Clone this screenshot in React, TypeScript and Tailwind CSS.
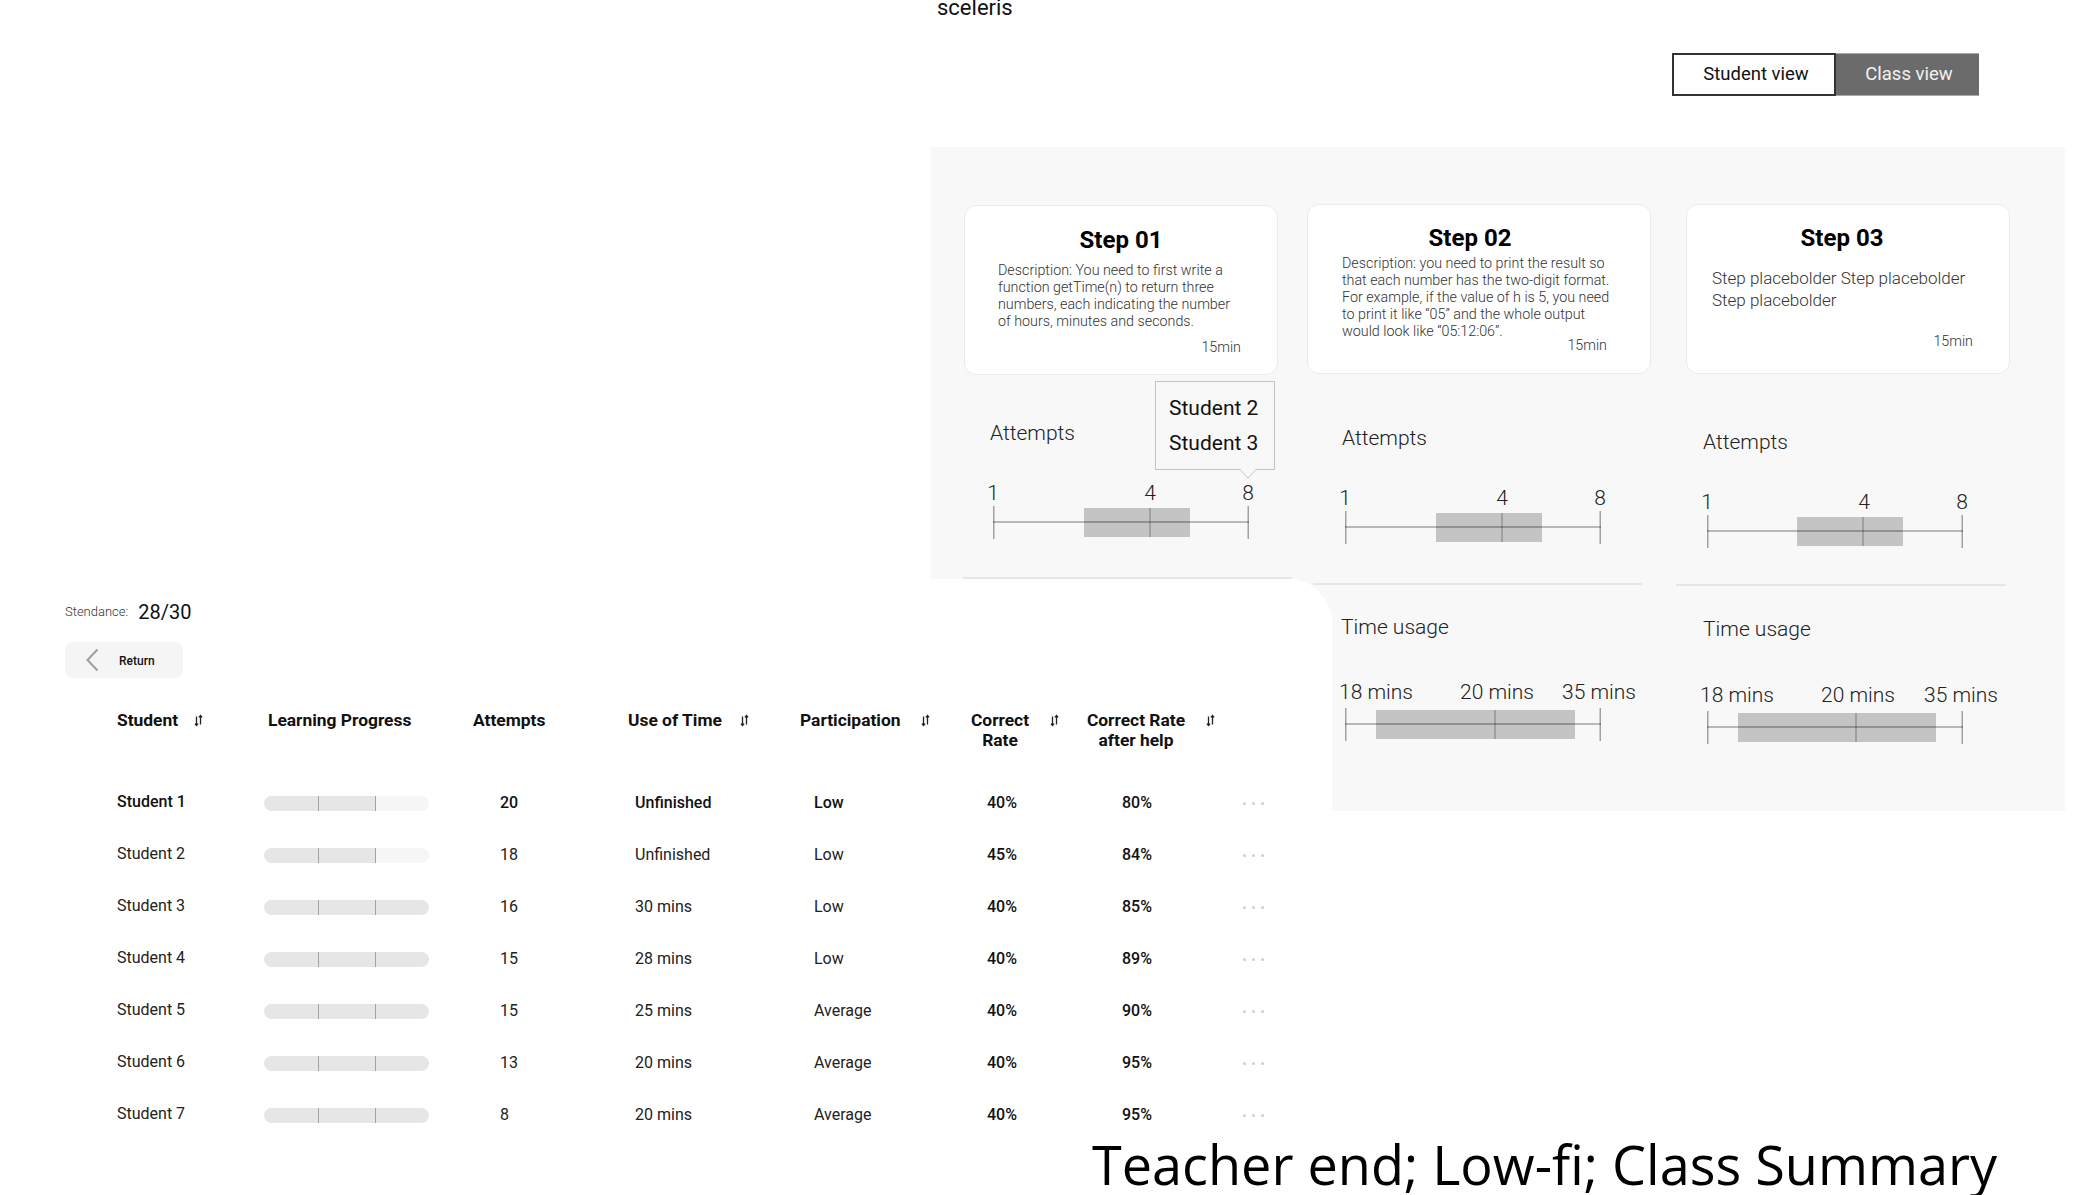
type Label = { text: string; x: number; center?: boolean };

interface BoxPlotProps {
  labels: Label[];
  boxStart: number;
  boxEnd: number;
  median: number;
  axisY: number;
}

function BoxPlot({ labels, boxStart, boxEnd, median, axisY }: BoxPlotProps) {
  return (
    <div className="relative h-[60px] w-[256px]">
      <svg className="absolute left-0 top-0 overflow-visible" width={256} height={60}>
        <rect x={boxStart} y={axisY - 14} width={boxEnd - boxStart} height={29} fill="#c4c4c4" />
        <line x1={0} x2={256} y1={axisY} y2={axisY} stroke="#000" strokeOpacity={0.35} strokeWidth={1.5} />
        <line x1={0.75} x2={0.75} y1={axisY - 16} y2={axisY + 17} stroke="#000" strokeOpacity={0.35} strokeWidth={1.5} />
        <line x1={255.25} x2={255.25} y1={axisY - 16} y2={axisY + 17} stroke="#000" strokeOpacity={0.35} strokeWidth={1.5} />
        <line x1={median} x2={median} y1={axisY - 14} y2={axisY + 15} stroke="#000" strokeOpacity={0.3} strokeWidth={1.2} />
      </svg>
      {labels.map((l) => (
        <span
          key={l.text}
          className={`absolute top-0 whitespace-nowrap text-[21px] font-light leading-[24px] text-[#222] ${l.center ? '-translate-x-1/2' : ''}`}
          style={{ left: l.x }}
        >
          {l.text}
        </span>
      ))}
    </div>
  );
}

const attemptLabels: Label[] = [
  { text: '1', x: 0, center: true },
  { text: '4', x: 157, center: true },
  { text: '8', x: 255, center: true },
];

function timeLabels(first: number, mid: number): Label[] {
  return [
    { text: '18 mins', x: first },
    { text: '20 mins', x: mid, center: true },
    { text: '35 mins', x: 254, center: true },
  ];
}

function SortIcon() {
  return (
    <svg width="9" height="13" viewBox="0 0 9 13" fill="none" stroke="#222" strokeWidth="1.3" className="mt-[4px] shrink-0">
      <path d="M2.5 2.5v9M0.9 9.6l1.6 1.9 1.6-1.9" />
      <path d="M6.5 10.5v-9M4.9 3.4l1.6-1.9 1.6 1.9" />
    </svg>
  );
}

function Dots() {
  return (
    <div className="flex gap-[6px]">
      <span className="h-[3px] w-[3px] rounded-full bg-[#cfcfcf]" />
      <span className="h-[3px] w-[3px] rounded-full bg-[#cfcfcf]" />
      <span className="h-[3px] w-[3px] rounded-full bg-[#cfcfcf]" />
    </div>
  );
}

function Progress({ done }: { done: boolean }) {
  return (
    <div className="flex h-[15px] w-[165px] overflow-hidden rounded-full">
      <div className="w-[54px] bg-[#e6e6e6]" />
      <div className="w-px bg-[#a3a3a3]" />
      <div className="w-[56px] bg-[#e6e6e6]" />
      <div className="w-px bg-[#a3a3a3]" />
      <div className={`flex-1 ${done ? 'bg-[#e6e6e6]' : 'bg-[#f6f6f6]'}`} />
    </div>
  );
}

const students = [
  { name: 'Student 1', done: false, attempts: '20', time: 'Unfinished', part: 'Low', rate: '40%', help: '80%' },
  { name: 'Student 2', done: false, attempts: '18', time: 'Unfinished', part: 'Low', rate: '45%', help: '84%' },
  { name: 'Student 3', done: true, attempts: '16', time: '30 mins', part: 'Low', rate: '40%', help: '85%' },
  { name: 'Student 4', done: true, attempts: '15', time: '28 mins', part: 'Low', rate: '40%', help: '89%' },
  { name: 'Student 5', done: true, attempts: '15', time: '25 mins', part: 'Average', rate: '40%', help: '90%' },
  { name: 'Student 6', done: true, attempts: '13', time: '20 mins', part: 'Average', rate: '40%', help: '95%' },
  { name: 'Student 7', done: true, attempts: '8', time: '20 mins', part: 'Average', rate: '40%', help: '95%' },
];

const cols = 'grid grid-cols-[147px_209px_155px_172px_160px_120px_150px_60px]';

function StudentTable() {
  return (
    <div className="pl-[117px]">
      <div className={`${cols} items-start text-[17.4px] font-bold leading-[20px] text-[#111]`}>
        <div className="flex items-start gap-[16px]">
          <span>Student</span>
          <SortIcon />
        </div>
        <div className="pl-[4px]">Learning Progress</div>
        <div>Attempts</div>
        <div className="flex items-start gap-[18px]">
          <span>Use of Time</span>
          <SortIcon />
        </div>
        <div className="flex items-start gap-[20px]">
          <span>Participation</span>
          <SortIcon />
        </div>
        <div className="flex items-start gap-[20px] pl-[10px]">
          <span className="w-[60px] text-center">
            Correct
            <br />
            Rate
          </span>
          <SortIcon />
        </div>
        <div className="flex items-start gap-[19px] pl-[5px]">
          <span className="w-[102px] text-center">
            Correct Rate
            <br />
            after help
          </span>
          <SortIcon />
        </div>
        <div />
      </div>
      <div className="mt-[27px]">
        {students.map((s, i) => {
          const strong = i === 0 ? 'font-medium text-[#111]' : 'text-[#222]';
          return (
            <div key={s.name} className={`${cols} h-[52px] items-center text-[16px] leading-[20px]`}>
              <div className={`-mt-[2px] ${strong}`}>{s.name}</div>
              <div>
                <Progress done={s.done} />
              </div>
              <div className={`pl-[27px] ${strong}`}>{s.attempts}</div>
              <div className={`pl-[7px] ${strong}`}>{s.time}</div>
              <div className={`pl-[14px] ${strong}`}>{s.part}</div>
              <div className="pl-[27px] font-medium text-[#111]">{s.rate}</div>
              <div className="pl-[42px] font-medium text-[#111]">{s.help}</div>
              <div className="pl-[13px]">
                <Dots />
              </div>
            </div>
          );
        })}
      </div>
    </div>
  );
}

function Tooltip() {
  return (
    <div className="absolute left-[192px] top-[-40px] h-[89px] w-[120px] border border-[#c4c4c4] bg-[#f8f8f8] pl-[13px] pt-[9px] text-[21px] font-normal leading-[35px] text-[#111]">
      <div>Student 2</div>
      <div>Student 3</div>
      <svg className="absolute left-[84px] top-[87px]" width="16" height="10" viewBox="0 0 16 10">
        <polygon points="0,0 8,9 16,0" fill="#f8f8f8" />
        <polyline points="0,0.5 8,9 16,0.5" fill="none" stroke="#c4c4c4" strokeWidth="1" />
      </svg>
    </div>
  );
}

export default function App() {
  return (
    <div className="relative h-[1195px] w-[2091px] overflow-hidden bg-white [font-family:Roboto,sans-serif] text-[#111]">
      <header className="flex h-[147px] flex-col">
        <div className="-mt-[3px] pl-[937px] text-[22px] leading-[22px] text-[#111]">sceleris</div>
        <div className="mt-[34px] flex justify-end pr-[112px]">
          <button type="button" className="flex h-[43px] w-[164px] items-center justify-center border-2 border-[#333] bg-white pl-[4px] text-[18.5px] text-[#111]">
            Student view
          </button>
          <button type="button" className="flex h-[43px] w-[143px] items-center justify-center border-y border-[#a8a8a8] bg-[#6b6b6b] pl-[3px] text-[18.5px] text-[#f2f2f2]">
            Class view
          </button>
        </div>
      </header>

      <div className="flex">
        <div className="w-[931px] shrink-0" />
        <section className="flex h-[664px] w-[1134px] shrink-0 bg-[#f8f8f8] pl-[32px] pt-[57px]">
          {/* step 01 */}
          <div className="w-[344px] shrink-0">
            <div className="ml-px mt-px h-[170px] w-[314px] rounded-[12px] border border-[#ebebeb] bg-white pt-[19px]">
              <div className="text-center text-[24px] font-bold leading-[30px] text-black">Step 01</div>
              <p className="mt-[7px] pl-[33px] text-[14.3px] font-light leading-[17px] text-[#333]">
                Description: You need to first write a<br />
                function getTime(n) to return three<br />
                numbers, each indicating the number<br />
                of hours, minutes and seconds.
              </p>
              <div className="mt-[9px] pr-[36px] text-right text-[14.3px] font-light leading-[17px] text-[#333]">15min</div>
            </div>
            <div className="relative mt-[46px] pl-[27px] text-[21px] font-light leading-[24px] text-[#222]">
              Attempts
              <Tooltip />
            </div>
            <div className="ml-[30px] mt-[36px]">
              <BoxPlot labels={attemptLabels} boxStart={91} boxEnd={197} median={157} axisY={41} />
            </div>
            <div className="mt-[36px] h-[2px] w-[329px] bg-[#e6e6e6]" />
          </div>

          {/* step 02 */}
          <div className="w-[369px] shrink-0">
            <div className="h-[170px] w-[344px] rounded-[12px] border border-[#ebebeb] bg-white pt-[18px]">
              <div className="pr-[18px] text-center text-[24px] font-bold leading-[30px] text-black">Step 02</div>
              <p className="mt-[2px] pl-[34px] text-[14.3px] font-light leading-[17px] text-[#333]">
                Description: you need to print the result so<br />
                that each number has the two-digit format.<br />
                For example, if the value of h is 5, you need<br />
                to print it like “05” and the whole output<br />
                would look like “05:12:06”.
              </p>
              <div className="-mt-[3px] pr-[43px] text-right text-[14.3px] font-light leading-[17px] text-[#333]">15min</div>
            </div>
            <div className="mt-[52px] pl-[35px] text-[21px] font-light leading-[24px] text-[#222]">Attempts</div>
            <div className="ml-[38px] mt-[36px]">
              <BoxPlot labels={attemptLabels} boxStart={91} boxEnd={197} median={157} axisY={41} />
            </div>
            <div className="ml-[6px] mt-[37px] h-[2px] w-[329px] bg-[#e6e6e6]" />
            <div className="mt-[30px] pl-[34px] text-[21px] font-light leading-[24px] text-[#222]">Time usage</div>
            <div className="ml-[38px] mt-[41px]">
              <BoxPlot labels={timeLabels(-6, 152)} boxStart={31} boxEnd={230} median={150} axisY={44} />
            </div>
          </div>

          {/* step 03 */}
          <div className="w-[389px] shrink-0">
            <div className="ml-[10px] h-[170px] w-[324px] rounded-[12px] border border-[#ebebeb] bg-white pt-[18px]">
              <div className="pr-[12px] text-center text-[24px] font-bold leading-[30px] text-black">Step 03</div>
              <p className="mt-[14px] pl-[25px] text-[17px] font-light leading-[22px] text-[#333]">
                Step placebolder Step placebolder<br />
                Step placebolder
              </p>
              <div className="mt-[22px] pr-[36px] text-right text-[14.3px] font-light leading-[17px] text-[#333]">15min</div>
            </div>
            <div className="mt-[56px] pl-[27px] text-[21px] font-light leading-[24px] text-[#222]">Attempts</div>
            <div className="ml-[31px] mt-[36px]">
              <BoxPlot labels={attemptLabels} boxStart={90} boxEnd={196} median={156} axisY={41} />
            </div>
            <div className="mt-[34px] h-[2px] w-[330px] bg-[#e6e6e6]" />
            <div className="mt-[31px] pl-[27px] text-[21px] font-light leading-[24px] text-[#222]">Time usage</div>
            <div className="ml-[31px] mt-[42px]">
              <BoxPlot labels={timeLabels(-7, 151)} boxStart={31} boxEnd={229} median={149} axisY={44} />
            </div>
          </div>
        </section>
      </div>

      <section className="relative z-10 -mt-[232px] h-[616px] w-[1332px] rounded-tr-[44px] bg-white pt-[21px]">
        <div className="flex h-[24px] items-center gap-[10px] pl-[65px]">
          <span className="text-[13px] font-light text-[#333]">Stendance:</span>
          <span className="text-[20px] text-[#111]">28/30</span>
        </div>
        <div className="ml-[65px] mt-[18px] flex h-[36px] w-[118px] items-center gap-[20px] rounded-[8px] bg-[#f5f5f5] pl-[20px]">
          <svg width="14" height="24" viewBox="0 0 14 24" fill="none" stroke="#9e9e9e" strokeWidth="2">
            <path d="M12.5 1.5L2.5 12l10 10.5" />
          </svg>
          <span className="pt-[2px] text-[12px] font-medium text-[#111]">Return</span>
        </div>
        <div className="mt-[32px]">
          <StudentTable />
        </div>
      </section>

      <div className="absolute left-[1092px] top-[1137px] z-20 whitespace-nowrap [font-family:'Open_Sans',sans-serif] text-[54px] leading-[54px] text-black">
        Teacher end; Low-fi; Class Summary
      </div>
    </div>
  );
}
